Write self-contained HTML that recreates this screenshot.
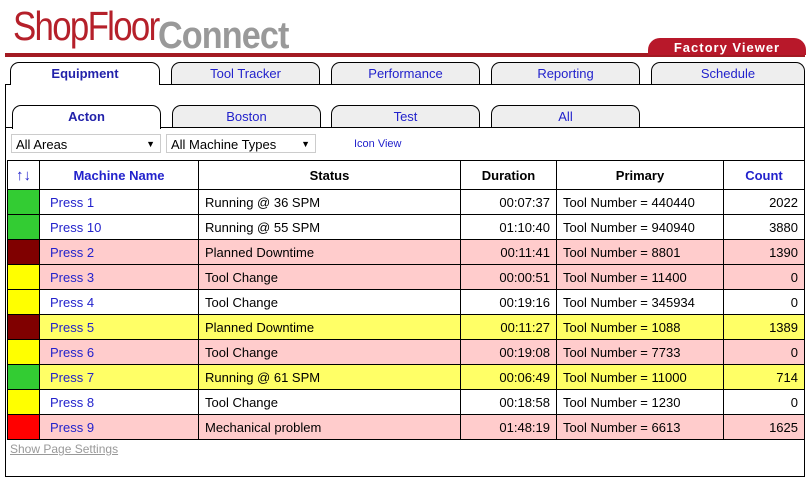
<!DOCTYPE html>
<html><head><style>
body{margin:0;width:809px;height:482px;background:#fff;position:relative;font-family:"Liberation Sans",Arial,sans-serif;overflow:hidden}
.abs{position:absolute}
.tab{position:absolute;height:21px;border:1px solid #000;border-bottom:none;border-radius:9px 9px 0 0;background:#eee;color:#2222cc;font-size:13px;text-align:center;line-height:22px}
.tab.sel{background:#fff;font-weight:bold;color:#2222aa;height:22px}
table{position:absolute;left:7px;top:160px;border-collapse:collapse;font-size:13px;width:797px;table-layout:fixed}
td,th{border:1px solid #000;padding:0 6px;height:24px;white-space:nowrap;overflow:hidden}
th{height:28px;font-size:13px}
td.n{color:#2222cc;padding-left:10px}
td.r{text-align:right}
tr.p{background:#ffcccc}tr.y{background:#ffff66}
.sel2{position:absolute;top:134px;height:19px;border:1px solid #ccc;font-size:13px;line-height:19px;padding-left:4px;box-sizing:border-box}
.sel2 span{position:absolute;right:5px;top:0;font-size:9px}
</style></head><body>
<div class="abs" style="left:13px;top:3px;font-size:41px;color:#b5202a;letter-spacing:-2px;transform:scaleX(0.85);transform-origin:left">ShopFloor</div>
<div class="abs" style="left:158px;top:15px;font-size:38px;color:#999;font-weight:bold;letter-spacing:-1px;transform:scaleX(0.9);transform-origin:left">Connect</div>
<div class="abs" style="left:5px;top:53px;width:800px;height:4px;background:#a31a22"></div>
<div class="abs" style="left:648px;top:38px;width:158px;height:17px;background:#b8182a;border-radius:12px 12px 0 0;color:#fff;font-weight:bold;font-size:13px;text-align:center;line-height:19px;letter-spacing:1px">Factory Viewer</div>
<div class="abs" style="left:5px;top:84px;width:798px;height:391px;border:1px solid #000"></div>
<div class="tab sel" style="left:10px;top:62px;width:148px">Equipment</div>
<div class="tab" style="left:171px;top:62px;width:147px">Tool Tracker</div>
<div class="tab" style="left:331px;top:62px;width:147px">Performance</div>
<div class="tab" style="left:491px;top:62px;width:147px">Reporting</div>
<div class="tab" style="left:651px;top:62px;width:152px">Schedule</div>
<div class="abs" style="left:5px;top:127px;width:799px;height:1px;background:#000"></div>
<div class="tab sel" style="left:12px;top:105px;width:147px;height:23px;color:#2222aa">Acton</div>
<div class="tab" style="left:172px;top:105px;width:147px">Boston</div>
<div class="tab" style="left:331px;top:105px;width:147px">Test</div>
<div class="tab" style="left:491px;top:105px;width:147px">All</div>
<div class="sel2" style="left:11px;width:150px">All Areas<span>▼</span></div>
<div class="sel2" style="left:166px;width:150px">All Machine Types<span>▼</span></div>
<div class="abs" style="left:354px;top:138px;font-size:11px;color:#2222cc">Icon View</div>
<table>
<colgroup><col style="width:32px"><col style="width:159px"><col style="width:262px"><col style="width:96px"><col style="width:167px"><col style="width:81px"></colgroup>
<tr><th style="color:#2222cc;font-weight:normal;font-size:15px;padding:0">↑↓</th><th style="color:#2222cc">Machine Name</th><th>Status</th><th>Duration</th><th>Primary</th><th style="color:#2222cc">Count</th></tr>
<tr><td style="background:#33cc33"></td><td class="n">Press 1</td><td>Running @ 36 SPM</td><td class="r">00:07:37</td><td>Tool Number = 440440</td><td class="r">2022</td></tr>
<tr><td style="background:#33cc33"></td><td class="n">Press 10</td><td>Running @ 55 SPM</td><td class="r">01:10:40</td><td>Tool Number = 940940</td><td class="r">3880</td></tr>
<tr class="p"><td style="background:#800000"></td><td class="n">Press 2</td><td>Planned Downtime</td><td class="r">00:11:41</td><td>Tool Number = 8801</td><td class="r">1390</td></tr>
<tr class="p"><td style="background:#ffff00"></td><td class="n">Press 3</td><td>Tool Change</td><td class="r">00:00:51</td><td>Tool Number = 11400</td><td class="r">0</td></tr>
<tr><td style="background:#ffff00"></td><td class="n">Press 4</td><td>Tool Change</td><td class="r">00:19:16</td><td>Tool Number = 345934</td><td class="r">0</td></tr>
<tr class="y"><td style="background:#800000"></td><td class="n">Press 5</td><td>Planned Downtime</td><td class="r">00:11:27</td><td>Tool Number = 1088</td><td class="r">1389</td></tr>
<tr class="p"><td style="background:#ffff00"></td><td class="n">Press 6</td><td>Tool Change</td><td class="r">00:19:08</td><td>Tool Number = 7733</td><td class="r">0</td></tr>
<tr class="y"><td style="background:#33cc33"></td><td class="n">Press 7</td><td>Running @ 61 SPM</td><td class="r">00:06:49</td><td>Tool Number = 11000</td><td class="r">714</td></tr>
<tr><td style="background:#ffff00"></td><td class="n">Press 8</td><td>Tool Change</td><td class="r">00:18:58</td><td>Tool Number = 1230</td><td class="r">0</td></tr>
<tr class="p"><td style="background:#ff0000"></td><td class="n">Press 9</td><td>Mechanical problem</td><td class="r">01:48:19</td><td>Tool Number = 6613</td><td class="r">1625</td></tr>
</table>
<div class="abs" style="left:10px;top:442px;font-size:12px;color:#999;text-decoration:underline">Show Page Settings</div>
</body></html>
